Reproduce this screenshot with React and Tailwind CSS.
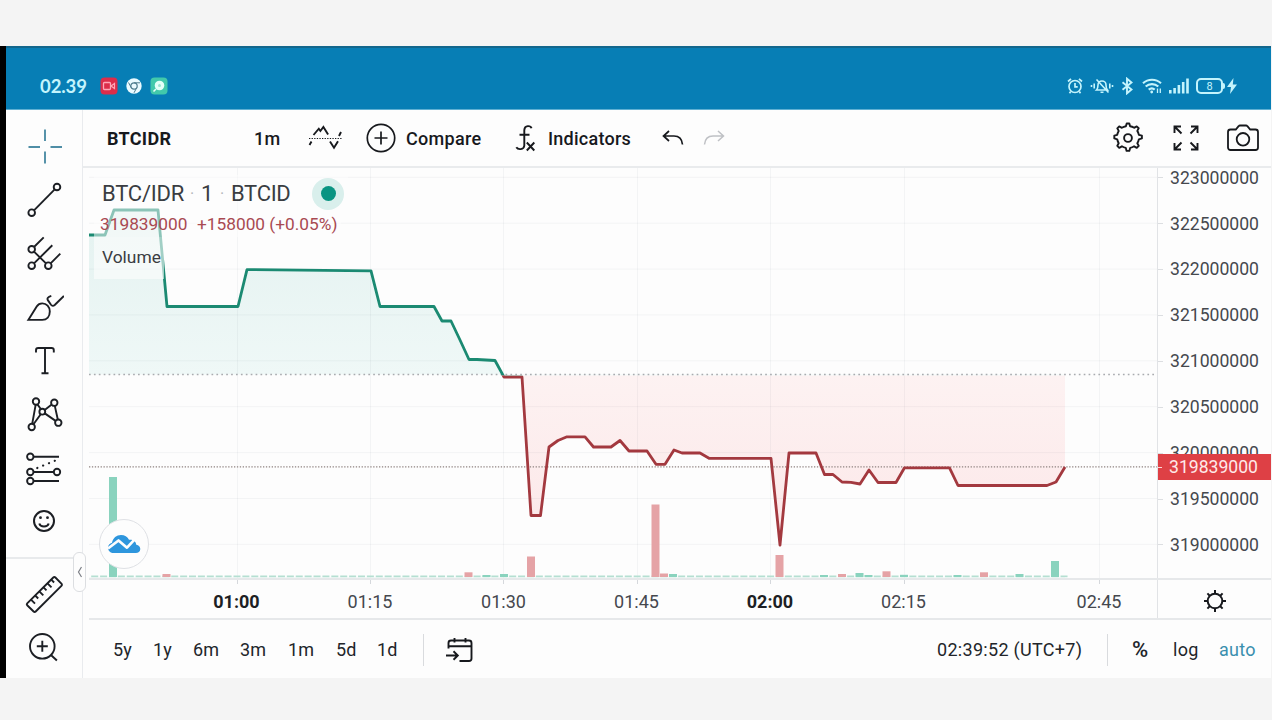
import React, { useState } from 'react';

// --- CHART DATA (x, y in pane units) ---
const PRICE_POINTS = [
  [89, 235], [105, 235], [114, 210], [158, 210], [167, 306.5], [238, 306.5], [247, 269.6],
  [371, 270.8], [380, 306.5], [434, 306.5], [442, 321], [451, 321], [460, 340], [469, 359.5], [477, 359.5],
  [495, 360.5], [504, 377], [522, 377], [531, 515.5], [540.5, 515.5], [549, 447], [558, 440.5],
  [567, 436.8], [585, 436.8], [593.5, 447], [611, 447], [620, 440.5], [629, 451], [647, 451],
  [656, 464.3], [665, 464.3], [674, 450], [682, 453], [700, 453], [709, 458.3], [771, 458.3],
  [780, 545], [789, 453], [816, 453], [824.5, 474.5], [833, 474.5], [842, 482], [851, 482.3],
  [860, 484], [869, 470], [878, 482.5], [896, 482.5], [904.5, 467.8], [949.5, 467.8],
  [958, 485.5], [1047, 485.5], [1056, 482], [1065, 467],
];

const BASELINE = 374.5;
const VOLUME_BOTTOM = 577;

const VOLUMES = [
  { x: 113, y: 477, up: true },
  { x: 166.5, y: 574, up: false },
  { x: 468.5, y: 572.3, up: false },
  { x: 486.5, y: 575, up: true },
  { x: 504, y: 574, up: true },
  { x: 531, y: 556.5, up: false },
  { x: 655.5, y: 504.5, up: false },
  { x: 664, y: 573.5, up: false },
  { x: 673, y: 574, up: true },
  { x: 779.5, y: 555, up: false },
  { x: 824, y: 575, up: true },
  { x: 842, y: 574, up: false },
  { x: 859.5, y: 573, up: true },
  { x: 868.5, y: 575, up: true },
  { x: 886.5, y: 571.3, up: false },
  { x: 904, y: 574.8, up: true },
  { x: 957.5, y: 575, up: true },
  { x: 984, y: 572.3, up: false },
  { x: 1019.5, y: 574, up: true },
  { x: 1055, y: 561, up: true },
];

const PRICES = [323000000, 322500000, 322000000, 321500000, 321000000, 320500000, 320000000, 319500000, 319000000];
const GRID_X = [237.5, 370.5, 503.5, 637.5, 770.5, 904.5, 1099.5];

const TIMES = [
  { label: '01:00', width: 'w-[133px]', bold: true },
  { label: '01:15', width: 'w-[134px]' },
  { label: '01:30', width: 'w-[133px]' },
  { label: '01:45', width: 'w-[133px]' },
  { label: '02:00', width: 'w-[134px]', bold: true },
  { label: '02:15', width: 'w-[133px]' },
];

const RANGES = [
  { label: '5y', cls: 'w-[40px]' },
  { label: '1y', cls: 'w-[40px]' },
  { label: '6m', cls: 'w-[47px]' },
  { label: '3m', cls: 'w-[48px]' },
  { label: '1m', cls: 'w-[48px]' },
  { label: '5d', cls: 'w-[41px]' },
  { label: '1d', cls: 'w-[43px]' },
];

// --- DRAWING TOOLS ---
const TOOLS = [
  {
    name: 'Cross', mt: '', color: 'text-[#4f8ea6]',
    icon: <path d="M21 3.500v11.500M21 25.500v12M4.500 21h11.500M26.500 21h11.500" />,
  },
  {
    name: 'Trend line', mt: 'mt-3.5',
    icon: <><circle cx="7.700" cy="32.700" r="3.300" /><circle cx="33" cy="7" r="3.300" /><path d="M10 30.300 30.700 9.400" /></>,
  },
  {
    name: 'Pitchfork', mt: 'mt-3.5',
    icon: <><circle cx="7.700" cy="15.300" r="3.300" /><circle cx="7.700" cy="31.700" r="3.300" /><circle cx="24.300" cy="31.700" r="3.300" /><path d="M10 13 19.700 3.300M10 29.400 28.300 11.300M26.600 29.400l9.700-9.700M10 17.600l12 11.800" /></>,
  },
  {
    name: 'Brush', mt: 'mt-3.5',
    icon: <><path d="M4.300 31.900 12.700 18.400c1.300-2 3.200-3 5.600-3 4.200 0 7.500 3.300 7.500 8.200s-3 8.300-7.500 8.300Z" /><path d="M27.300 7.800c-3.300 1-4.600 2.600-3.300 4.600l3 4.300c1.100 1.500 2.400 1.500 3.700.3L39.900 8" /></>,
  },
  {
    name: 'Text', mt: 'mt-[13px]',
    icon: <path d="M12 11.500V9.300C12 7.800 12.700 7 14.200 7h13.400c1.500 0 2.200.8 2.200 2.300v2.200M21 7v25.300M17.500 32.300h7" />,
  },
  {
    name: 'Pattern', mt: 'mt-[13px]',
    icon: <><circle cx="12" cy="7.500" r="3.200" /><circle cx="30.300" cy="8.700" r="3.200" /><circle cx="18.300" cy="17.700" r="2.900" /><circle cx="7.700" cy="33" r="3.200" /><circle cx="34.300" cy="28.700" r="3.200" /><path d="M13.400 10.400 17 15.200M20.700 15.900l7-5.300M30.800 11.900l3 13.600M31.600 26.900 20.800 19.400M16.700 20.200 9.500 30.300M11.700 10.700 8.200 29.800" /></>,
  },
  {
    name: 'Prediction', mt: 'mt-[15px]',
    icon: <><circle cx="6.300" cy="7.700" r="3.200" /><circle cx="6.300" cy="23" r="3.200" /><circle cx="33" cy="23" r="3.200" /><circle cx="6.300" cy="32" r="3.200" /><path d="M9.500 7.700H35M9.500 23h20.300M9.500 32H35" /><path d="M13.300 19 32 11.300" strokeDasharray="0.100 6.200" strokeWidth="2.200" strokeLinecap="round" /></>,
  },
  {
    name: 'Icons', mt: 'mt-3',
    icon: <><circle cx="20" cy="20" r="10" strokeWidth="2" /><path d="M15.300 22.500c1.200 4 8.200 4 9.400 0" strokeWidth="2" /><circle cx="16.500" cy="16.700" r="1.400" fill="currentColor" stroke="none" /><circle cx="23.500" cy="16.700" r="1.400" fill="currentColor" stroke="none" /></>,
  },
];

function ToolIcon({ children, className = '' }) {
  return (
    <svg className={`w-10 h-10 shrink-0 ${className}`} viewBox="0 0 40 40" fill="none" stroke="currentColor" strokeWidth="1.900">
      {children}
    </svg>
  );
}

function StatusBar() {
  return (
    <div className="h-16 bg-[#077eb5] border-t-2 border-b border-t-[#12668c] border-b-[#5fb0d3] flex items-center pl-[34px] pr-[34px] pt-[15px] text-[#c4f4fc]">
      <span className="w-[60px] font-['Lato'] text-[18.5px] leading-none tracking-[-0.1px] whitespace-nowrap font-bold">02.39</span>
      <svg className="w-[18px] h-[18px]" viewBox="0 0 18 18">
        <rect x="0.500" y="0.500" width="17" height="17" rx="4" fill="#dc2d4a" />
        <rect x="3.500" y="5.500" width="7" height="7" rx="1" fill="none" stroke="#ffa6b6" strokeWidth="1.300" />
        <path d="m11 9 3.500-2.500v5Z" fill="none" stroke="#ffa6b6" strokeWidth="1.200" />
      </svg>
      <svg className="w-4 h-4 ml-2" viewBox="0 0 16 16">
        <circle cx="8" cy="8" r="7.700" fill="#eafaff" />
        <circle cx="8" cy="8" r="3.200" fill="#eafaff" stroke="#4d7c8e" strokeWidth="1.200" />
        <path d="M8 4.800h6M5.300 9.700 2.500 4.500M10.700 9.700 8 14.800" stroke="#4d7c8e" strokeWidth="1" />
      </svg>
      <svg className="w-[18px] h-[18px] ml-2" viewBox="0 0 18 18">
        <rect x="0.500" y="0.500" width="17" height="17" rx="4" fill="#42c9ab" />
        <circle cx="9.500" cy="8.500" r="4.800" fill="#e4fff8" />
        <circle cx="9.500" cy="8.500" r="1.500" fill="#9be4d2" />
        <path d="M6 12l-2.500 2.500" stroke="#e4fff8" strokeWidth="1.600" />
      </svg>

      <div className="ml-auto flex items-center">
        {/* alarm */}
        <svg className="w-4 h-[18px]" viewBox="0 0 16 18" fill="none" stroke="currentColor" strokeWidth="1.700">
          <circle cx="8" cy="9.500" r="6" /><path d="M8 6v3.800h2.700M1 4.500l3-2.700M15 4.500l-3-2.700M3.700 14.500l-1.200 1.700M12.300 14.500l1.200 1.700" />
        </svg>
        {/* muted bell */}
        <svg className="w-6 h-[18px] ml-[7px]" viewBox="0 0 24 18" fill="none" stroke="currentColor" strokeWidth="1.600">
          <path d="M6.500 13h11c-1.500-1.600-1.500-3-1.500-5a4 4 0 0 0-8 0c0 2 0 3.400-1.500 5ZM10.500 15.300h3M6.500 2.500l12 13M4.200 6.500v5M19.800 6.500v5M1.500 8v2M22.500 8v2" />
        </svg>
        {/* bluetooth */}
        <svg className="w-3 h-[18px] ml-[7px]" viewBox="0 0 12 18" fill="none" stroke="currentColor" strokeWidth="1.900">
          <path d="m1.500 5.300 9 7.200L6 16.300V1.700l4.500 3.800-9 7.200" />
        </svg>
        {/* wifi */}
        <svg className="w-5 h-[18px] ml-[9px]" viewBox="0 0 20 18" fill="none" stroke="currentColor" strokeWidth="2.100">
          <path d="M1 6.300c5-4.800 13-4.800 18 0M3.700 9.600c3.500-3.300 9-3.300 12.600 0M6.700 12.600c2-1.600 4.200-1.600 6 0" />
          <circle cx="9.700" cy="15" r="1.400" fill="currentColor" stroke="none" />
          <path d="M15.500 11.500v4.500M18.300 11.500v4.500" strokeWidth="1.300" />
        </svg>
        {/* signal */}
        <svg className="w-5 h-[18px] ml-[7px]" viewBox="0 0 20 18" fill="currentColor">
          <rect x="0" y="13" width="2.600" height="3.500" /><rect x="4.300" y="11" width="2.600" height="5.500" />
          <rect x="8.600" y="8" width="2.600" height="8.500" /><rect x="12.900" y="5" width="2.600" height="11.500" /><rect x="17.200" y="1.500" width="2.600" height="15" />
        </svg>
        {/* battery */}
        <div className="ml-[7px] w-[27px] h-[16px] rounded-[5px] border-2 border-current flex items-center justify-center font-['Roboto'] text-[11px] leading-none">8</div>
        <div className="w-0.5 h-1.5 bg-current rounded-r" />
        <svg className="w-2.5 h-4 ml-0.5" viewBox="0 0 10 16" fill="currentColor"><path d="M6.500 0 0 9h4l-1 7 7-9.500H5.800Z" /></svg>
      </div>
    </div>
  );
}

function Sidebar() {
  return (
    <div className="relative w-[77px] shrink-0 border-r border-[#e9ebee] text-[#1c1f24]">
      <div className="flex flex-col pl-[18px] pt-4">
        {TOOLS.map(tool => (
          <button key={tool.name} title={tool.name} className={`w-10 h-10 ${tool.mt} ${tool.color || ''}`}>
            <ToolIcon>{tool.icon}</ToolIcon>
          </button>
        ))}
      </div>
      <div className="mt-4 border-t-2 border-[#e8eaec]" />
      <div className="flex flex-col pl-[18px] pt-4 gap-[13px]">
        <ToolIcon>
          <path d="M3.200 28.400 29.300 2.500c.7-.7 1.400-.7 2.100 0l6 6.200c.7.700.7 1.400 0 2.100L11.700 36.500c-.7.700-1.400.7-2.100 0l-6.400-6.200c-.6-.7-.6-1.300 0-1.900Z" />
          <path d="m7 24.700 4 4M11.200 20.500l3 3M15.300 16.300l4 4M19.500 12.300l3 3M23.500 8.300l4 4M27.300 4.700l2.800 2.800" />
        </ToolIcon>
        <ToolIcon>
          <circle cx="18.300" cy="18.300" r="12.300" /><path d="M18.300 12.800v11M12.800 18.300h11M27.200 27.200l5.700 5.300" />
        </ToolIcon>
      </div>
      {/* collapse handle */}
      <button className="absolute left-[67px] top-[442px] w-[13px] h-10 rounded-md border border-[#dcdee1] bg-[#fdfdfd] flex items-center justify-center z-10">
        <svg className="w-1.5 h-3" viewBox="0 0 6 12" fill="none" stroke="#7b7e85" strokeWidth="1.200"><path d="M4.500 1 1.500 6l3 5" /></svg>
      </button>
    </div>
  );
}

function Toolbar() {
  return (
    <div className="h-[58px] border-b-2 border-[#e9ebed] flex items-center pl-6 pr-3 text-[18px] font-medium text-[#17191d]">
      <span className="w-[147px] font-bold tracking-[0.3px]">BTCIDR</span>
      <span className="w-[54px] whitespace-nowrap tracking-[0.3px]">1m</span>
      <svg className="w-[34px] h-7" viewBox="0 0 34 28" fill="none" stroke="currentColor" strokeWidth="1.900">
        <path d="M1 14.500h33" strokeWidth="1.200" strokeDasharray="1.300 1.300" />
        <path d="m5.500 11 5.300-6.300 1.600 2.300 3-4 4.700 7.500M1.500 21l2-3.500M22 17.500l4 6.200 4-6.500M31 12l2-4" />
      </svg>
      <svg className="w-[30px] h-[30px] ml-[24px]" viewBox="0 0 30 30" fill="none" stroke="currentColor" strokeWidth="1.700">
        <circle cx="15" cy="15" r="13.700" /><path d="M15 8.500v13M8.500 15h13" />
      </svg>
      <span className="w-[108px] ml-[10px] tracking-[0.3px]">Compare</span>
      <svg className="w-6 h-7" viewBox="0 0 24 28" fill="none" stroke="currentColor" strokeWidth="1.900">
        <path d="M17.500 4.300C16.700 1.500 10.700.800 10.300 6v15.500c-.3 4.500-6.300 4.500-8 1.800M5.500 10.700h10M12.800 18.500l7.500 8M20.300 18.500l-7.500 8" />
      </svg>
      <span className="w-[114px] ml-2.5 tracking-[0.25px]">Indicators</span>
      <svg className="w-[22px] h-[18px]" viewBox="0 0 22 18" fill="none" stroke="currentColor" strokeWidth="1.700">
        <path d="M7 2 1.500 7 7 12M1.500 7H12c5 0 8 3 8.500 8.500" />
      </svg>
      <svg className="w-[22px] h-[18px] ml-[19px] text-[#bfc1c5]" viewBox="0 0 22 18" fill="none" stroke="currentColor" strokeWidth="1.500">
        <path d="m15 2 5.500 5L15 12M20.500 7H10C5 7 2 10 1.500 15.500" />
      </svg>

      <div className="ml-auto flex items-center">
        <svg className="w-8 h-8" viewBox="0 0 32 32" fill="none" stroke="currentColor" strokeWidth="1.900">
          <path strokeLinejoin="round" d="M13.900 4.300 14.700 1.500h2.600l.8 2.800c1.600.3 2.800.8 4 1.500l2.600-1.400 2 1.900-1.400 2.600c.8 1.200 1.300 2.500 1.600 4l3 .8v2.700l-3 .9c-.3 1.400-.8 2.700-1.600 3.900l1.500 2.700-2 1.900-2.700-1.500c-1.200.8-2.400 1.300-3.900 1.600l-.9 3h-2.700l-.8-3c-1.500-.3-2.700-.8-3.900-1.600l-2.700 1.500-1.900-2 1.400-2.600c-.7-1.200-1.200-2.400-1.500-3.900l-2.900-.9v-2.700l2.900-.8c.3-1.500.8-2.800 1.500-4L5.300 6.300l1.900-1.900 2.700 1.400c1.200-.7 2.500-1.200 4-1.500Z" />
          <circle cx="16" cy="16" r="3.900" />
        </svg>
        <svg className="w-[26px] h-[26px] ml-[29px]" viewBox="0 0 26 26" fill="none" stroke="currentColor" strokeWidth="1.900">
          <path d="M1.500 8V1.500H8M1.500 1.500l7 7M18 1.500h6.500V8M24.500 1.500l-7 7M1.500 18v6.500H8M1.500 24.500l7-7M18 24.500h6.500V18M24.500 24.500l-7-7" />
        </svg>
        <svg className="w-8 h-7 ml-[28px]" viewBox="0 0 32 28" fill="none" stroke="currentColor" strokeWidth="1.800">
          <path d="M3.500 5.500h5.300l2.800-3.300c.4-.5.800-.700 1.400-.7h6c.6 0 1 .2 1.400.7l2.800 3.300h5.300c1.500 0 2.500 1 2.500 2.500v15.500c0 1.500-1 2.500-2.500 2.500h-25C2 26 1 25 1 23.500V8c0-1.500 1-2.500 2.500-2.500Z" />
          <circle cx="16" cy="15.300" r="6.300" />
        </svg>
      </div>
    </div>
  );
}

function ChartPane() {
  const line = PRICE_POINTS.map(p => p.join(',')).join(' ');
  const area = `89,${BASELINE} ${line} 1065,${BASELINE}`;
  const fillers = Array.from({ length: 110 }, (_, i) => 95 + i * 8.893);

  return (
    <div className="relative w-[1068px] shrink-0 overflow-hidden">
      <svg className="block w-[1068px] h-[411px]" viewBox="89 168 1068 411">
        <defs>
          <clipPath id="above"><rect x="89" y="168" width="1068" height={BASELINE + 1 - 168} /></clipPath>
          <clipPath id="below"><rect x="89" y={BASELINE + 1} width="1068" height="204" /></clipPath>
          <linearGradient id="upFill" gradientUnits="userSpaceOnUse" x1="0" y1="210" x2="0" y2="375">
            <stop offset="0" stopColor="#e4f2f0" /><stop offset="1" stopColor="#eff8f7" />
          </linearGradient>
          <linearGradient id="downFill" gradientUnits="userSpaceOnUse" x1="0" y1="375" x2="0" y2="545">
            <stop offset="0" stopColor="#fdf2f2" /><stop offset="1" stopColor="#fce7e8" />
          </linearGradient>
        </defs>
        <polygon points={area} fill="url(#upFill)" clipPath="url(#above)" />
        <polygon points={area} fill="url(#downFill)" clipPath="url(#below)" />
        {PRICES.map((p, i) => (
          <line key={p} x1="89" x2="1157" y1={177.3 + i * 45.88} y2={177.3 + i * 45.88} stroke="#5b6b7b" strokeOpacity="0.060" />
        ))}
        {GRID_X.map(x => (
          <line key={x} x1={x} x2={x} y1="168" y2="579" stroke="#5b6b7b" strokeOpacity="0.060" />
        ))}

        <line x1="89" x2="1065" y1="578.400" y2="578.400" stroke="#dcefe9" strokeWidth="1.500" />
        {fillers.map(x => (
          <rect key={x} x={x - 3.8} y="575.500" width="7" height="1.700" fill="#b5dfd2" />
        ))}
        {VOLUMES.map(v => (
          <rect key={v.x} x={v.x - 4} y={v.y} width="8" height={VOLUME_BOTTOM - v.y} fill={v.up ? '#8ad3be' : '#e5a3a6'} />
        ))}

        <line x1="89" x2="1157" y1="374.500" y2="374.500" stroke="#a9abaf" strokeWidth="1.700" strokeDasharray="1.700 3.200" />
        <line x1="89" x2="1157" y1="466.800" y2="466.800" stroke="#8f8380" strokeWidth="1.300" strokeDasharray="1.300 1.600" />
        <polyline points={line} fill="none" stroke="#1b8a72" strokeWidth="2.800" strokeLinejoin="round" clipPath="url(#above)" />
        <polyline points={line} fill="none" stroke="#a3393f" strokeWidth="2.800" strokeLinejoin="round" clipPath="url(#below)" />
      </svg>

      {/* legend */}
      <div className="absolute left-[5px] top-[7px] flex flex-col items-start">
        <div className="h-[37px] pl-2 pr-1 bg-[#fdfdfd]/50 flex items-center text-[22px] text-[#3a3d42] whitespace-nowrap">
          <span className="w-[81px] tracking-[-0.2px]">BTC/IDR</span>
          <span className="w-[18px] text-center text-[#b4b6ba] text-base">·</span>
          <span className="w-3">1</span>
          <span className="w-[18px] text-center text-[#b4b6ba] text-base">·</span>
          <span className="w-[81px] tracking-[-0.3px]">BTCID</span>
          <span className="w-8 h-8 rounded-full bg-[#d9efec] flex items-center justify-center">
            <span className="w-[15px] h-[15px] rounded-full bg-[#0a9482]" />
          </span>
        </div>
        <div className="h-[25px] pl-1.5 pr-1 bg-[#fdfdfd]/50 flex items-center text-[17.3px] text-[#a94a52] whitespace-nowrap">
          <span className="w-[97px]">319839000</span>
          <span>+158000 (+0.05%)</span>
        </div>
        <div className="h-[42px] w-[70px] pl-2 pb-px bg-[#fdfdfd]/60 flex items-center text-[17.4px] text-[#3a3d42]">Volume</div>
      </div>

      {/* watermark button */}
      <div className="absolute left-[10px] top-[351px] w-[50px] h-[50px] rounded-full bg-[#fdfdfd] border-[1.5px] border-[#dfe1e5] flex items-center justify-center">
        <svg className="w-[34px] h-5" viewBox="0 0 34 20">
          <path d="M7 19c-3.700 0-6-2.300-6-5.300 0-2.500 1.600-4.400 4-5C6 4 9.500 1 14 1c3.700 0 6.500 1.700 8 4.700 4.500-.5 7 2 7.300 5 2.500.5 4 2 4 4.300 0 2.500-2 4-4.500 4Z" fill="#2e96dd" />
          <path d="m1 14.500 10.500-8L20 13.700l7-7.500" fill="none" stroke="#fdfdfd" strokeWidth="2.700" strokeLinejoin="round" />
        </svg>
      </div>
    </div>
  );
}

function PriceAxis() {
  return (
    <div className="relative flex-1 border-l border-[#e1e3e6] overflow-hidden text-[17.6px] text-[#45484e]">
      <div className="flex flex-col -mt-[13px]">
        {PRICES.map(p => (
          <div key={p} className="h-[45.880px] shrink-0 flex items-center">
            <span className="w-[5px] h-px bg-[#dcdee1] mr-[7px]" />
            <span>{p}</span>
          </div>
        ))}
      </div>
      <div className="absolute -left-px right-0 top-[286px] h-[26px] bg-[#de4045] text-[#ffe9e9] flex items-center">
        <span className="w-[5px] h-px bg-[#ffd6d6] mr-[7px]" />
        <span>319839000</span>
      </div>
    </div>
  );
}

function TimeAxis() {
  return (
    <div className="h-[42px] flex border-y-2 border-[#e6e8ea] text-[18px] text-[#45484e]">
      <div className="relative w-[1068px] shrink-0 flex items-center pl-[81px] pt-1">
        {TIMES.map(t => (
          <span key={t.label} className={`${t.width} shrink-0 text-center ${t.bold ? 'font-bold text-[#1d1f24]' : ''}`}>{t.label}</span>
        ))}
        <span className="ml-[62px] w-[134px] -mr-8 shrink-0 text-center">02:45</span>
        <svg className="absolute left-0 top-0 w-[1068px] h-1" viewBox="89 0 1068 4">
          {GRID_X.map(x => <line key={x} x1={x} x2={x} y1="0" y2="4" stroke="#d5d8dc" />)}
        </svg>
      </div>
      <div className="flex-1 border-l border-[#e1e3e6] flex items-center justify-center text-[#17191d]">
        <svg className="w-6 h-6 mt-1" viewBox="0 0 24 24" fill="none" stroke="currentColor" strokeWidth="2">
          <circle cx="12" cy="12" r="7.300" />
          <path d="M12 1v3.500M12 19.500V23M1 12h3.500M19.500 12H23M4.400 4.400l2.300 2.300M17.300 17.300l2.300 2.300M4.400 19.600l2.300-2.300M17.300 6.700l2.300-2.300" />
        </svg>
      </div>
    </div>
  );
}

function BottomBar() {
  const [range, setRange] = useState(null);

  return (
    <div className="flex-1 flex items-center pl-6 pt-px text-[18px] text-[#22252a] whitespace-nowrap">
      {RANGES.map(r => (
        <button key={r.label} onClick={() => setRange(r.label)} aria-pressed={range === r.label} className={`${r.cls} text-left tracking-[0.2px]`}>
          {r.label}
        </button>
      ))}
      <span className="w-px h-8 bg-[#d9dbde] ml-[3px]" />
      <svg className="w-[28px] h-[28px] ml-[22px] text-[#17191d]" viewBox="0 0 28 28" fill="none" stroke="currentColor" strokeWidth="1.900">
        <path d="M2.500 12.500V7c0-1.500 1-2.500 2.500-2.500h18c1.500 0 2.500 1 2.500 2.500v15.500c0 1.500-1 2.500-2.500 2.500h-9.500M2.500 10.300h23M8.500 2v4.500M19.500 2v4.500M0 19.500h11M7.500 15.300l4.300 4.200-4.300 4.200" />
      </svg>
      <div className="ml-auto flex items-center">
        <span className="w-[170px] tracking-[0.300px]">02:39:52 (UTC+7)</span>
        <span className="w-px h-8 bg-[#d9dbde]" />
        <span className="w-[41px] ml-6 text-[22px] font-medium">%</span>
        <span className="w-[46px] tracking-[0.300px]">log</span>
        <span className="w-[52px] text-[#3a8fae] tracking-[0.300px]">auto</span>
      </div>
    </div>
  );
}

export default function App() {
  return (
    <div className="w-[1272px] h-[720px] bg-[#f4f4f4] pt-[46px] overflow-hidden font-['Roboto',sans-serif]">
      <div className="w-[1271px] h-[632px] bg-[#fdfdfd] border-l-[6px] border-black flex flex-col">
        <StatusBar />
        <div className="flex-1 flex min-h-0">
          <Sidebar />
          <div className="flex-1 min-w-0 flex flex-col">
            <Toolbar />
            <div className="flex-1 ml-1.5 min-h-0 flex flex-col">
              <div className="h-[410px] flex shrink-0">
                <ChartPane />
                <PriceAxis />
              </div>
              <TimeAxis />
              <BottomBar />
            </div>
          </div>
        </div>
      </div>
    </div>
  );
}
